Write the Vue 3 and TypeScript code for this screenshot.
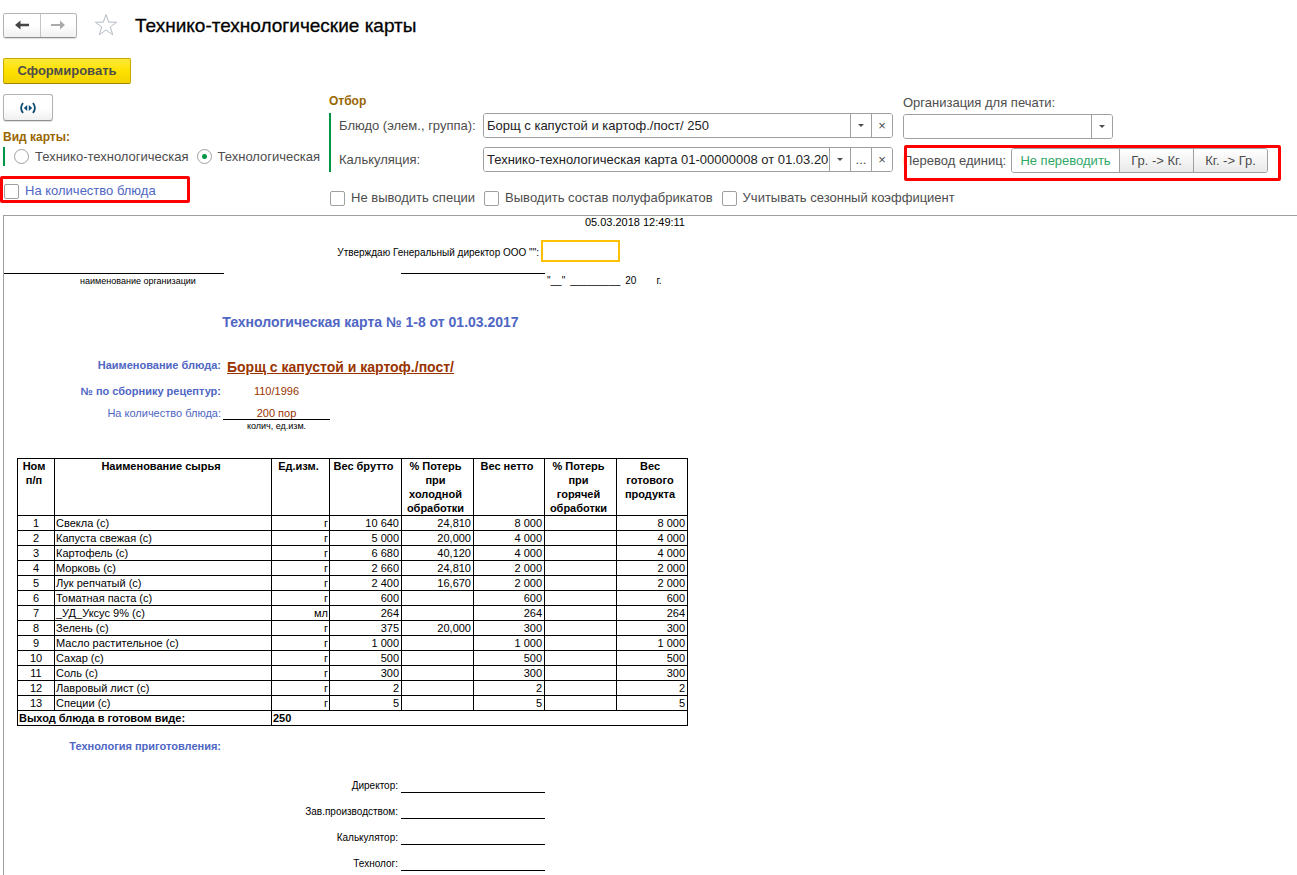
<script setup lang="ts">
import { ref } from 'vue'

interface Ingredient {
  name: string
  unit: string
  gross: string
  coldLoss: string
  net: string
  ready: string
}

const cardKind = ref<'full' | 'tech'>('tech')
const perQuantity = ref(false)
const dish = ref('Борщ с капустой и картоф./пост/ 250')
const calculation = ref('Технико-технологическая карта 01-00000008 от 01.03.2017')
const organization = ref('')
const conversion = ref('Не переводить')
const conversions = ['Не переводить', 'Гр. -> Кг.', 'Кг. -> Гр.']

const options = ref([
  { id: 'spices', label: 'Не выводить специи', on: false },
  { id: 'semi', label: 'Выводить состав полуфабрикатов', on: false },
  { id: 'season', label: 'Учитывать сезонный коэффициент', on: false },
])

const row = (name: string, unit: string, gross: string, coldLoss: string, net: string, ready: string): Ingredient =>
  ({ name, unit, gross, coldLoss, net, ready })

const ingredients: Ingredient[] = [
  row('Свекла (с)', 'г', '10 640', '24,810', '8 000', '8 000'),
  row('Капуста свежая (с)', 'г', '5 000', '20,000', '4 000', '4 000'),
  row('Картофель (с)', 'г', '6 680', '40,120', '4 000', '4 000'),
  row('Морковь (с)', 'г', '2 660', '24,810', '2 000', '2 000'),
  row('Лук репчатый (с)', 'г', '2 400', '16,670', '2 000', '2 000'),
  row('Томатная паста (с)', 'г', '600', '', '600', '600'),
  row('_УД_Уксус 9% (с)', 'мл', '264', '', '264', '264'),
  row('Зелень (с)', 'г', '375', '20,000', '300', '300'),
  row('Масло растительное (с)', 'г', '1 000', '', '1 000', '1 000'),
  row('Сахар (с)', 'г', '500', '', '500', '500'),
  row('Соль (с)', 'г', '300', '', '300', '300'),
  row('Лавровый лист (с)', 'г', '2', '', '2', '2'),
  row('Специи (с)', 'г', '5', '', '5', '5'),
]

const signers = ['Директор:', 'Зав.производством:', 'Калькулятор:', 'Технолог:']
</script>

<template>
  <div class="page">
    <header class="titlebar">
      <div class="nav">
        <button type="button" aria-label="Назад">
          <svg width="16" height="12" viewBox="0 0 16 12"><path d="M1 6 L6.5 1.5 V4.8 H15 V7.2 H6.5 V10.5 Z" fill="#444" /></svg>
        </button>
        <button type="button" aria-label="Вперед">
          <svg width="16" height="12" viewBox="0 0 16 12"><path d="M15 6 L10 1.5 V5 H1 V7 H10 V10.5 Z" fill="#aaa" /></svg>
        </button>
      </div>
      <button type="button" class="star" aria-label="В избранное">
        <svg width="24" height="24" viewBox="0 0 24 24">
          <path d="M12 1.5 L14.7 9.2 H22.6 L16.3 14 L18.7 21.8 L12 17 L5.3 21.8 L7.7 14 L1.4 9.2 H9.3 Z" fill="#fff" stroke="#b4bcc4" stroke-width="1" />
        </svg>
      </button>
      <h1>Технико-технологические карты</h1>
    </header>

    <button type="button" class="generate">Сформировать</button>

    <div class="filters">
      <section class="kind">
        <button type="button" class="params" aria-label="Параметры">
          <svg width="18" height="12" viewBox="0 0 18 12">
            <path d="M4 1 Q0.2 6 4 11 M14 1 Q17.8 6 14 11" fill="none" stroke="#0d4a73" stroke-width="1.8" />
            <path d="M8.2 3 V9 L4.8 6 Z M9.8 3 V9 L13.2 6 Z" fill="#0d4a73" />
          </svg>
        </button>
        <h2>Вид карты:</h2>
        <div class="radios">
          <label><input v-model="cardKind" type="radio" name="kind" value="full" />Технико-технологическая</label>
          <label><input v-model="cardKind" type="radio" name="kind" value="tech" />Технологическая</label>
        </div>
        <label class="quantity"><input v-model="perQuantity" type="checkbox" />На количество блюда</label>
      </section>

      <section class="selection">
        <h2>Отбор</h2>
        <div class="fields">
          <label for="dish">Блюдо (элем., группа):</label>
          <div class="combo">
            <input id="dish" v-model="dish" type="text" />
            <button type="button" aria-label="Выбрать"><i class="caret"></i></button>
            <button type="button" aria-label="Очистить">×</button>
          </div>
          <label for="calc">Калькуляция:</label>
          <div class="combo">
            <input id="calc" v-model="calculation" type="text" />
            <button type="button" aria-label="Выбрать"><i class="caret"></i></button>
            <button type="button" aria-label="Открыть список">...</button>
            <button type="button" aria-label="Очистить">×</button>
          </div>
        </div>
        <div class="options">
          <label v-for="o in options" :key="o.id"><input v-model="o.on" type="checkbox" />{{ o.label }}</label>
        </div>
      </section>

      <section class="print">
        <label for="org">Организация для печати:</label>
        <div class="combo org">
          <input id="org" v-model="organization" type="text" />
          <button type="button" aria-label="Выбрать"><i class="caret"></i></button>
        </div>
        <div class="convert">
          <span id="convert-label">Перевод единиц:</span>
          <div class="segments" role="group" aria-labelledby="convert-label">
            <button
              v-for="c in conversions"
              :key="c"
              type="button"
              :class="{ active: c === conversion }"
              :aria-pressed="c === conversion"
              @click="conversion = c"
            >{{ c }}</button>
          </div>
        </div>
      </section>
    </div>

    <main class="sheet">
      <div class="report">
        <div class="stamp">05.03.2018 12:49:11</div>
        <div class="approve">
          <span>Утверждаю Генеральный директор ООО "":</span>
          <span class="cell"></span>
        </div>
        <div class="lines"><span></span><span></span></div>
        <div class="undertext">
          <span class="org-name">наименование организации</span>
          <span class="date"><span>"__"</span><span>_________</span><span>20</span><span>г.</span></span>
        </div>
        <h3>Технологическая карта № 1-8 от 01.03.2017</h3>
        <dl class="facts">
          <dt>Наименование блюда:</dt>
          <dd class="dish">Борщ с капустой и картоф./пост/</dd>
          <dt class="code">№ по сборнику рецептур:</dt>
          <dd class="short">110/1996</dd>
          <dt class="plain">На количество блюда:</dt>
          <dd class="short ruled">200 пор</dd>
        </dl>
        <div class="measure">колич, ед.изм.</div>

        <table>
          <colgroup>
            <col class="c-num" /><col class="c-name" /><col class="c-unit" /><col class="c-w" />
            <col class="c-w" /><col class="c-net" /><col class="c-w" /><col class="c-net" />
          </colgroup>
          <thead>
            <tr>
              <th>Ном п/п</th>
              <th>Наименование сырья</th>
              <th>Ед.изм.</th>
              <th>Вес брутто</th>
              <th>% Потерь при холодной обработки</th>
              <th>Вес нетто</th>
              <th>% Потерь при горячей обработки</th>
              <th>Вес готового продукта</th>
            </tr>
          </thead>
          <tbody>
            <tr v-for="(r, i) in ingredients" :key="r.name">
              <td class="mid">{{ i + 1 }}</td>
              <td class="left">{{ r.name }}</td>
              <td class="unit">{{ r.unit }}</td>
              <td>{{ r.gross }}</td>
              <td>{{ r.coldLoss }}</td>
              <td>{{ r.net }}</td>
              <td></td>
              <td>{{ r.ready }}</td>
            </tr>
          </tbody>
          <tfoot>
            <tr>
              <td colspan="2">Выход блюда в готовом виде:</td>
              <td colspan="6">250</td>
            </tr>
          </tfoot>
        </table>

        <h4>Технология приготовления:</h4>
        <div class="signatures">
          <div v-for="s in signers" :key="s"><span>{{ s }}</span><i></i></div>
        </div>
      </div>
    </main>
  </div>
</template>

<style>
body {
  margin: 0;
  background: #fff;
}
</style>

<style scoped>
* {
  box-sizing: border-box;
}
.page {
  display: flex;
  flex-direction: column;
  min-height: 100vh;
  font: 13px/16px "Liberation Sans", Arial, sans-serif;
  color: #4d4d4d;
  white-space: nowrap;
}
button,
input {
  font: inherit;
  color: inherit;
  margin: 0;
  padding: 0;
}
button {
  display: flex;
  align-items: center;
  justify-content: center;
  background: #fff;
  border: 0;
}
h1, h2, h3, h4, dl, dd {
  margin: 0;
}
.titlebar {
  display: flex;
  align-items: center;
  height: 48px;
  padding: 2px 3px 0;
}
.nav {
  display: flex;
  width: 74px;
  height: 25px;
  border: 1px solid #b3b3b3;
  border-bottom-color: #8f8f8f;
  border-radius: 3px;
  overflow: hidden;
  box-shadow: 0 1px 1px #ddd;
}
.nav button {
  flex: 1;
  background: linear-gradient(#fff 50%, #f0f0f0);
}
.nav button + button {
  border-left: 1px solid #c4c4c4;
}
.star {
  margin: 0 17px;
  background: none;
}
h1 {
  padding-top: 2px;
  font-size: 19px;
  line-height: 24px;
  font-weight: 400;
  color: #000;
  -webkit-text-stroke: 0.3px #000;
}
.generate {
  width: 128px;
  height: 26px;
  flex: none;
  margin: 10px 3px 0;
  border: 1px solid #c9a800;
  border-bottom-color: #a08600;
  border-radius: 2px;
  background: linear-gradient(#ffe93a, #ffe100 50%, #f2d200);
  font-weight: 700;
}
.filters {
  display: flex;
  flex: none;
  height: 121px;
  margin-top: 10px;
}
.kind {
  flex: none;
  width: 329px;
}
.params {
  width: 50px;
  height: 27px;
  margin-left: 3px;
  border: 1px solid #b3b3b3;
  border-bottom-color: #8f8f8f;
  border-radius: 3px;
  box-shadow: 0 1px 1px #ddd;
  background: linear-gradient(#fff 50%, #f0f0f0);
}
h2 {
  font-size: 12px;
  line-height: 14px;
  color: #960;
}
.kind h2 {
  margin: 9px 3px 3px;
}
.radios {
  display: flex;
  height: 19px;
  margin-left: 3px;
  padding-left: 9px;
  gap: 8px;
  border-left: 2px solid #009646;
}
label {
  display: flex;
  align-items: center;
}
.radios label {
  gap: 6px;
}
input[type="radio"],
input[type="checkbox"] {
  appearance: none;
  flex: none;
  width: 15px;
  height: 15px;
  border: 1px solid #a0a0a0;
  border-radius: 2px;
  background: #fff;
}
input[type="radio"] {
  border-radius: 50%;
}
input[type="radio"]:checked {
  background: radial-gradient(circle, #009646 2px, #fff 3px);
}
input[type="checkbox"]:checked {
  background: #009646;
}
.quantity {
  width: 190px;
  height: 27px;
  margin-top: 10px;
  padding: 3px 0 0 1px;
  gap: 6px;
  border: 3px solid #f00;
  border-radius: 2px;
  color: #4f66c4;
}
.selection {
  flex: none;
  width: 574px;
}
.selection h2 {
  margin-bottom: 5px;
}
.fields {
  display: grid;
  grid-template-columns: 136px 410px;
  grid-auto-rows: 25px;
  gap: 9px 8px;
  padding-left: 8px;
  border-left: 2px solid #009646;
}
.combo {
  display: flex;
  height: 25px;
  border: 1px solid #a0a0a0;
  border-radius: 3px;
  overflow: hidden;
}
.combo input {
  flex: 1;
  min-width: 0;
  padding-left: 3px;
  border: 0;
  outline: 0;
  background: #fff;
  color: #222;
}
.combo button {
  width: 21px;
  border-left: 1px solid #a0a0a0;
}
.caret {
  border: 3px solid transparent;
  border-top-color: #4d4d4d;
  border-bottom: 0;
}
.options {
  display: flex;
  gap: 9px;
  margin: 18px 0 0 1px;
}
.options label {
  gap: 6px;
}
.print > label {
  height: 17px;
}
.org {
  width: 210px;
  margin-top: 3px;
}
.convert {
  position: relative;
  display: flex;
  align-items: flex-start;
  gap: 6px;
  width: 378px;
  height: 36px;
  margin-top: 6px;
  padding-top: 3px;
}
.convert::after {
  content: "";
  position: absolute;
  inset: 0 0 0 1px;
  border: 3px solid #f00;
  border-radius: 2px;
  pointer-events: none;
}
.convert > span {
  width: 102px;
  line-height: 25px;
}
.segments {
  display: flex;
  height: 25px;
  width: 257px;
  border: 1px solid #a0a0a0;
  border-radius: 3px;
  overflow: hidden;
}
.segments button {
  flex: 1;
  background: linear-gradient(#fff, #e9e9e9);
}
.segments button + button {
  border-left: 1px solid #a0a0a0;
}
.segments .active {
  flex: none;
  width: 107px;
  background: #fff;
  color: #2fa866;
}
.sheet {
  flex: 1;
  margin-left: 3px;
  border: solid #a0a0a0;
  border-width: 1px 0 0 1px;
}
.report {
  width: 684px;
  font-size: 11px;
  line-height: 14px;
  color: #000;
}
.stamp {
  padding-right: 3px;
  line-height: 13px;
  text-align: right;
}
.approve {
  display: flex;
  justify-content: flex-end;
  align-items: center;
  gap: 2px;
  margin: 11px 68px 0 0;
  font-size: 10px;
}
.approve span:first-child {
  padding-top: 3px;
}
.cell {
  width: 79px;
  height: 22px;
  border: 2px solid #fec000;
}
.lines {
  display: flex;
  justify-content: space-between;
  height: 12px;
  padding-right: 143px;
}
.lines span {
  width: 220px;
  border-bottom: 1px solid #000;
}
.lines span + span {
  width: 144px;
}
.undertext {
  display: flex;
  font-size: 9px;
}
.org-name {
  width: 268px;
  text-align: center;
}
.date {
  display: flex;
  gap: 5px;
  padding-left: 275px;
  font-size: 10px;
}
.date span:last-child {
  margin-left: 15px;
}
h3 {
  padding-left: 49px;
  margin-top: 25px;
  font-size: 14px;
  line-height: 18px;
  text-align: center;
  color: #4f66c4;
}
.facts {
  display: grid;
  grid-template-columns: 217px 1fr;
  column-gap: 2px;
  margin-top: 25px;
}
dt {
  height: 26px;
  line-height: 18px;
  font-weight: 700;
  color: #4f66c4;
  text-align: right;
}
.code {
  height: 22px;
}
.plain {
  font-weight: 400;
  height: 16px;
}
dd {
  color: #993300;
  line-height: 18px;
}
.dish {
  padding-left: 4px;
  font-size: 14px;
  line-height: 22px;
  font-weight: 700;
  text-decoration: underline;
}
.short {
  width: 107px;
  text-align: center;
}
.ruled {
  height: 16px;
  border-bottom: 1px solid #000;
}
.measure {
  width: 107px;
  margin-left: 219px;
  font-size: 9px;
  line-height: 12px;
  text-align: center;
}
table {
  width: 671px;
  margin: 26px 0 0 13px;
  table-layout: fixed;
  border-collapse: collapse;
}
.c-num { width: 37px; }
.c-name { width: 217px; }
.c-unit { width: 58px; }
.c-w { width: 72px; }
.c-net { width: 71px; }
th,
td {
  height: 14px;
  padding: 0 2px;
  border: 1px solid #000;
  line-height: 14px;
  text-align: right;
}
th {
  padding: 0 5px 0 1px;
  vertical-align: top;
  text-align: center;
  white-space: normal;
}
.left,
tfoot td {
  padding: 0 1px;
  text-align: left;
}
.mid {
  text-align: center;
}
.unit {
  padding-right: 1px;
}
tfoot td {
  font-weight: 700;
}
h4 {
  width: 217px;
  margin-top: 12px;
  font-size: 11px;
  line-height: 16px;
  text-align: right;
  color: #4f66c4;
}
.signatures {
  margin-top: 13px;
  font-size: 10px;
}
.signatures div {
  display: flex;
  align-items: flex-end;
  height: 26px;
  gap: 3px;
}
.signatures span {
  width: 394px;
  text-align: right;
}
.signatures i {
  width: 144px;
  height: 14px;
  border-bottom: 1px solid #000;
}
</style>
